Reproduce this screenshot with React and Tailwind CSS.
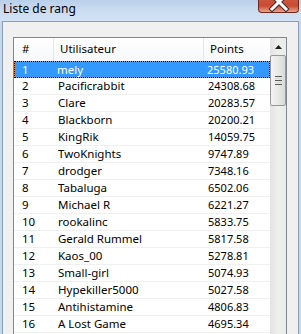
import React from "react";

const rows = [
  ["1", "mely", "25580.93"],
  ["2", "Pacificrabbit", "24308.68"],
  ["3", "Clare", "20283.57"],
  ["4", "Blackborn", "20200.21"],
  ["5", "KingRik", "14059.75"],
  ["6", "TwoKnights", "9747.89"],
  ["7", "drodger", "7348.16"],
  ["8", "Tabaluga", "6502.06"],
  ["9", "Michael R", "6221.27"],
  ["10", "rookalinc", "5833.75"],
  ["11", "Gerald Rummel", "5817.58"],
  ["12", "Kaos_00", "5278.81"],
  ["13", "Small-girl", "5074.93"],
  ["14", "Hypekiller5000", "5027.58"],
  ["15", "Antihistamine", "4806.83"],
  ["16", "A Lost Game", "4695.34"],
];

function Row({ r, selected }) {
  if (selected) {
    return (
      <div className="h-[17px] bg-[#e0892a]">
        <div className="h-[17px] flex border border-dotted border-black bg-[#3399ff] bg-clip-padding text-white">
          <div className="w-[39px] pl-[7px] leading-[15px] text-[11.5px]">{r[0]}</div>
          <div className="w-[150px] pl-[3px] leading-[15px] text-[11.5px]">{r[1]}</div>
          <div className="flex-1 pl-[3px] leading-[15px] text-[11px]">{r[2]}</div>
        </div>
      </div>
    );
  }
  return (
    <div className="h-[17px] flex border-b border-[#f0f0f0] text-black">
      <div className="w-[40px] pl-[8px] leading-[16px] text-[11.5px]">{r[0]}</div>
      <div className="w-[150px] pl-[4px] leading-[16px] text-[11.5px]">{r[1]}</div>
      <div className="flex-1 pl-[4px] leading-[16px] text-[11px]">{r[2]}</div>
    </div>
  );
}

export default function App() {
  return (
    <div className="w-[301px] h-[334px] overflow-hidden relative bg-[#c4d8ee] font-['Noto_Sans',sans-serif] text-[11px] flex flex-col">
      {/* title bar */}
      <div className="h-[21px] shrink-0 bg-gradient-to-b from-[#b9d0ea] via-[#cadcf1] to-[#d2e2f4] flex items-center pl-[3px]">
        <span className="text-[12px] text-black leading-none -mt-[3px]">Liste de rang</span>
      </div>
      {/* close button */}
      <div className="absolute left-[258px] top-0 w-[41px] h-[13px] rounded-b-[4px] border border-t-0 border-[#6e2a1c] bg-gradient-to-b from-[#c9553e] via-[#cc4a32] to-[#e6a48f] overflow-hidden">
        <svg width="41" height="13" className="absolute left-0 top-0">
          <path d="M13 -5 L27 9 M27 -5 L13 9" stroke="#4a2a26" strokeWidth="5" strokeLinecap="square" />
          <path d="M13 -5 L27 9 M27 -5 L13 9" stroke="#ffffff" strokeWidth="3" strokeLinecap="square" />
        </svg>
      </div>
      {/* body */}
      <div className="flex-1 px-[2px] flex flex-col">
        <div className="flex-1 border border-b-0 border-[#8b9db3] bg-[#f0f0f0] pt-[15px] pl-[10px] pr-[11px]">
          <div className="h-[400px] border border-[#828790] bg-white flex">
            <div className="flex-1 flex flex-col">
              {/* header */}
              <div className="h-[23px] flex bg-gradient-to-b from-white to-[#f7f8fa] text-black text-[11.5px]">
                <div className="w-[40px] pl-[8px] leading-[22px] border-r border-[#e3e5e8]">#</div>
                <div className="w-[150px] pl-[6px] leading-[22px] border-r border-[#e3e5e8]">Utilisateur</div>
                <div className="flex-1 pl-[6px] leading-[22px]">Points</div>
              </div>
              {rows.map((r, i) => (
                <Row key={r[0]} r={r} selected={i === 0} />
              ))}
            </div>
            {/* scrollbar */}
            <div className="w-[16px] bg-gradient-to-r from-[#e3e3e3] via-[#efefef] to-[#ebebeb] flex flex-col">
              <div className="h-[17px] flex items-center justify-center">
                <svg width="7" height="4" viewBox="0 0 7 4">
                  <path d="M0 4 L3.5 0 L7 4 Z" fill="#1e1e1e" />
                </svg>
              </div>
              <div className="h-[51px] rounded-[2px] border border-[#979797] bg-gradient-to-r from-[#f3f3f3] via-[#e9e9e9] to-[#d9d9d9] flex flex-col items-center justify-center gap-[1px]">
                <div className="w-[7px] h-[1px] bg-[#5a5a5a]" />
                <div className="w-[7px] h-[1px] bg-[#d8d8d8]" />
                <div className="w-[7px] h-[1px] bg-[#5a5a5a]" />
                <div className="w-[7px] h-[1px] bg-[#d8d8d8]" />
                <div className="w-[7px] h-[1px] bg-[#5a5a5a]" />
              </div>
            </div>
          </div>
        </div>
      </div>
    </div>
  );
}
